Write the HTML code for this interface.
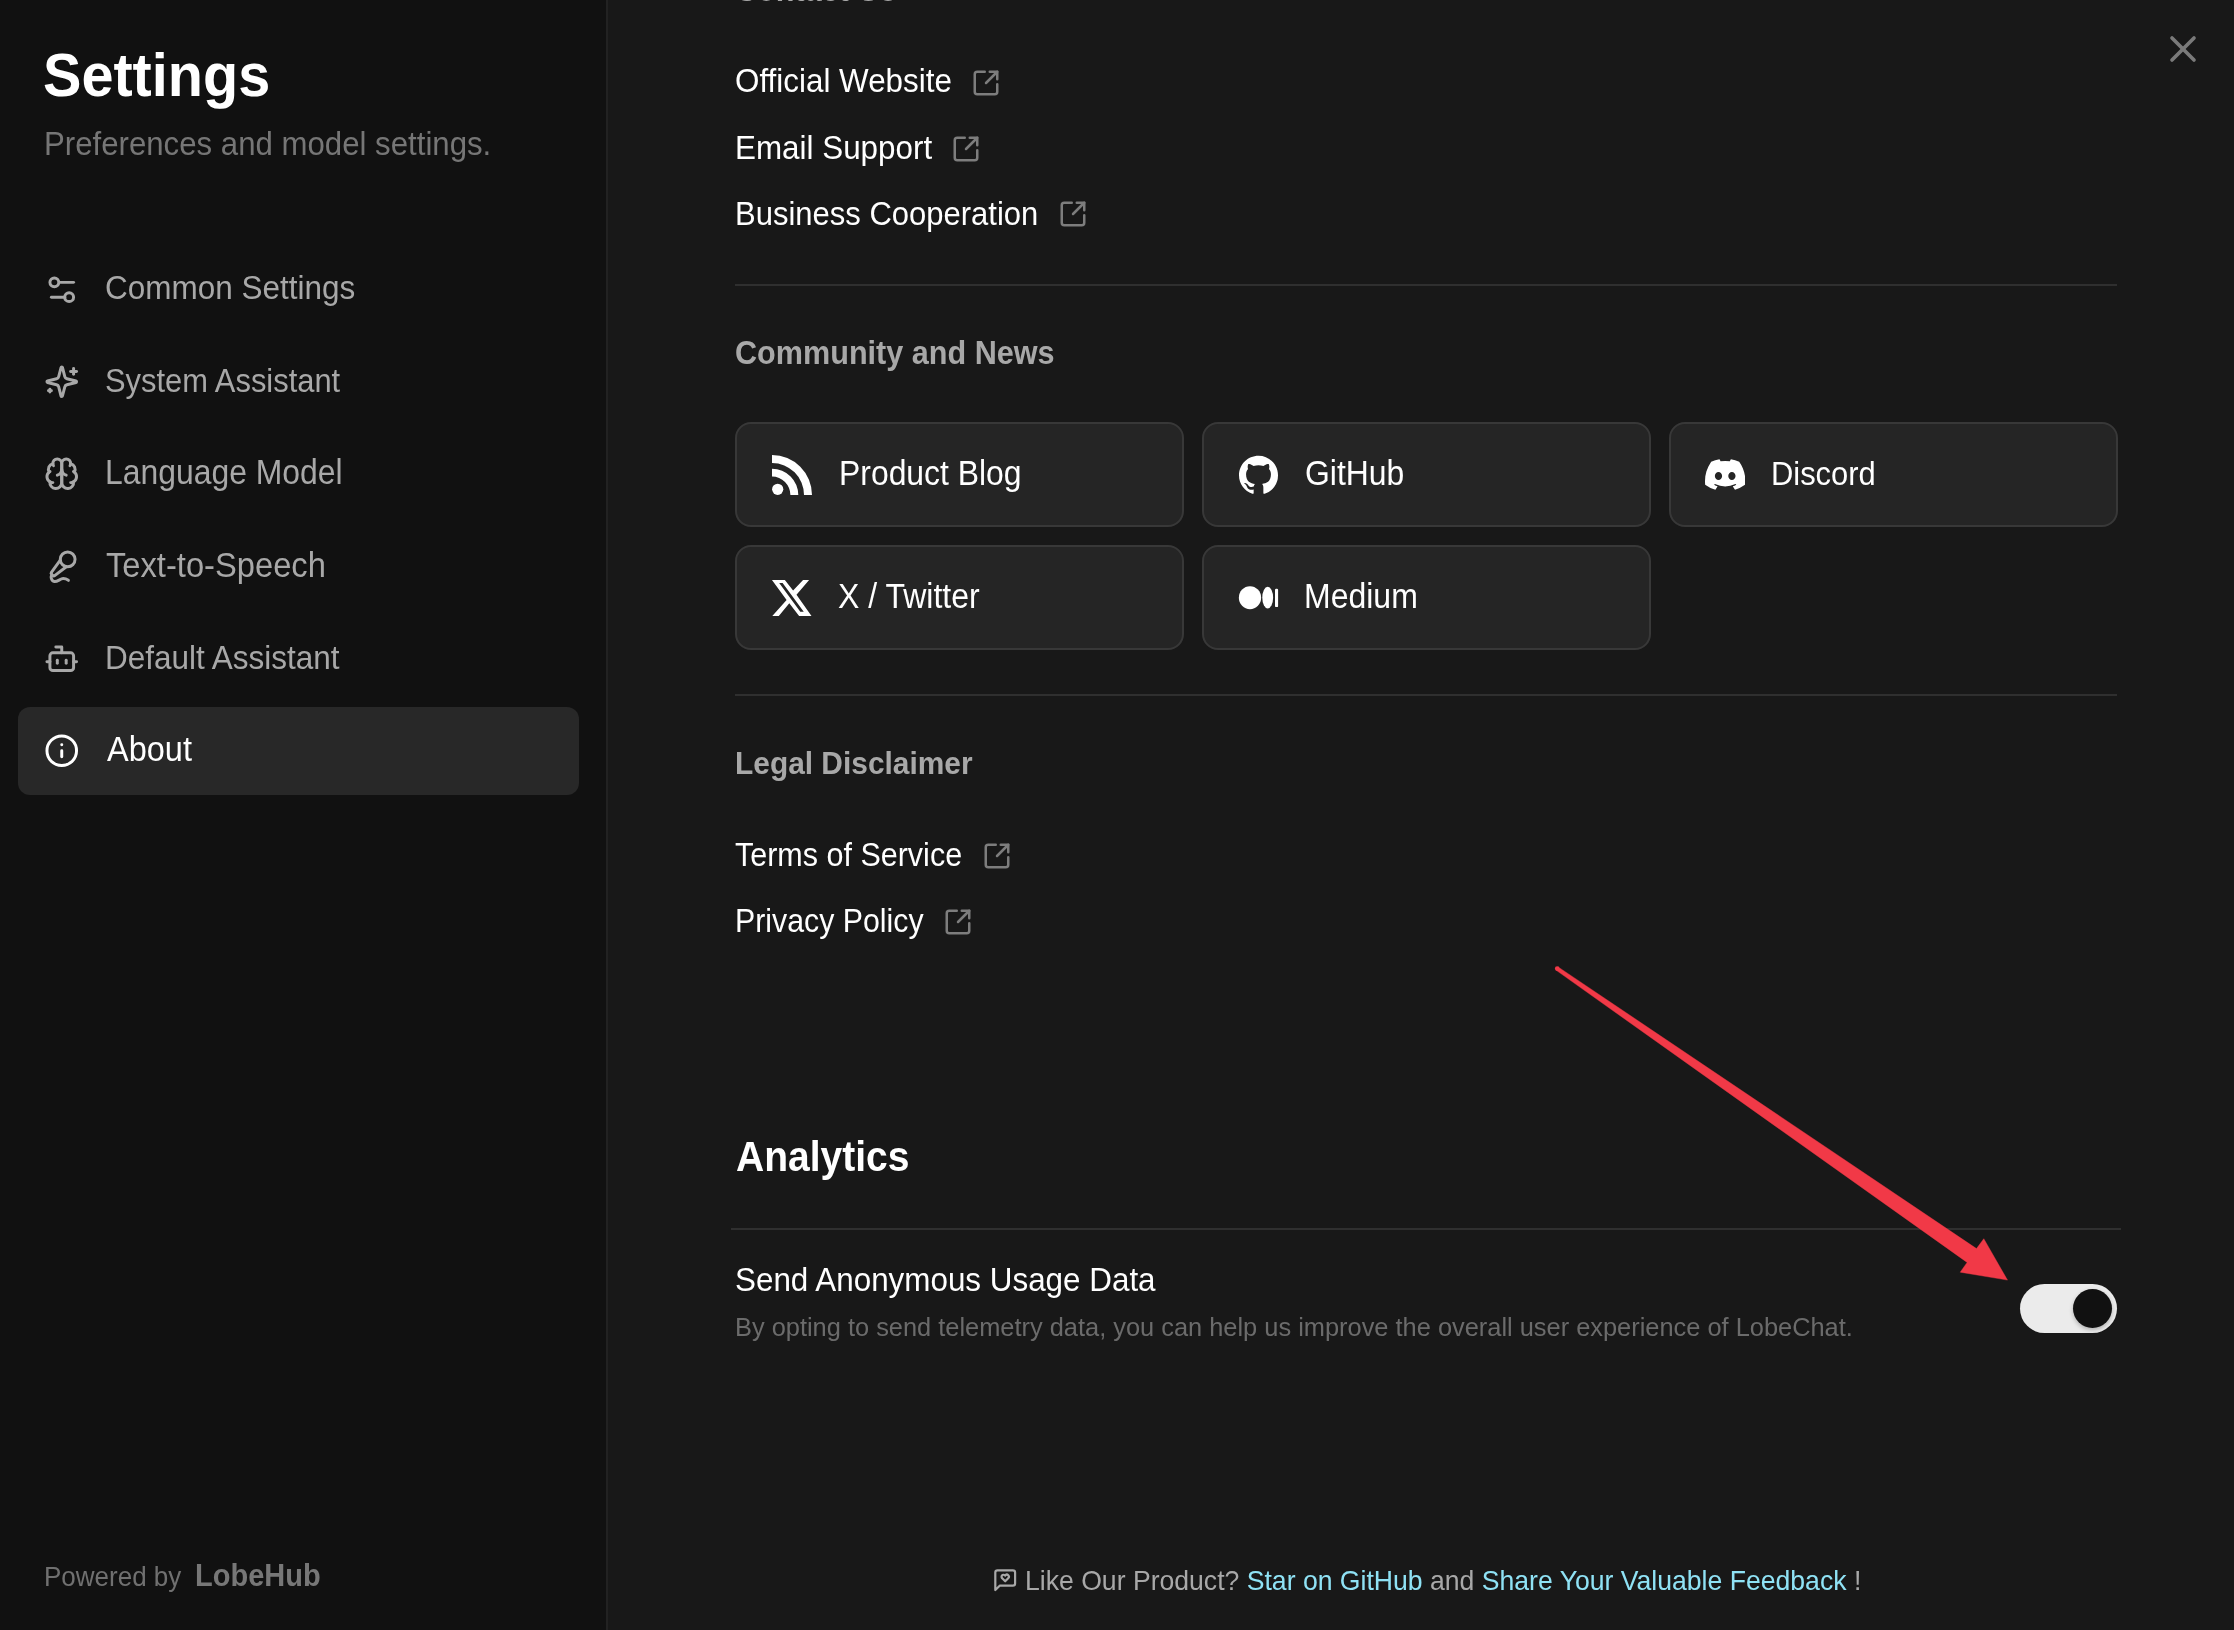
<!DOCTYPE html>
<html>
<head>
<meta charset="utf-8">
<style>
html,body{margin:0;padding:0;}
body{width:2234px;height:1630px;overflow:hidden;background:#181818;position:relative;font-family:"Liberation Sans",sans-serif;}
.t{position:absolute;line-height:1;white-space:nowrap;top:calc(var(--b) - 0.8465em);transform:scaleY(var(--sy,1.07));transform-origin:0 0.8465em;will-change:transform;}
#side{position:absolute;left:0;top:0;width:606px;height:1630px;background:#111111;}
#sideborder{position:absolute;left:606px;top:0;width:2px;height:1630px;background:#222222;}
.nav{color:#a8a8a8;font-size:31.5px;left:105px;}
.ico{position:absolute;width:35.5px;height:35.5px;fill:none;stroke:#a8a8a8;stroke-width:2;stroke-linecap:round;stroke-linejoin:round;}
#active{position:absolute;left:18px;top:707px;width:561px;height:88px;border-radius:12px;background:#282828;}
.link{color:#ffffff;font-size:31.4px;left:735px;}
.ext{position:absolute;width:30px;height:30px;fill:none;stroke:#7d7d7d;stroke-width:2;stroke-linecap:round;stroke-linejoin:round;}
.h2{color:#a8a8a8;font-size:30.6px;font-weight:bold;left:735px;}
.div{position:absolute;left:735px;width:1382px;height:2px;background:#2f2f2f;}
.btn{position:absolute;width:445px;height:101px;border:2px solid #383838;border-radius:16px;background:#252525;}
.btxt{color:#ffffff;font-size:31.6px;}
</style>
</head>
<body>
<div id="side"></div>
<div id="sideborder"></div>

<div class="t" style="--b:97px;left:42.6px;--sy:1.06;font-size:57.6px;font-weight:bold;color:#ffffff;">Settings</div>
<div class="t" style="--b:155.9px;left:43.9px;--sy:1.04;font-size:31.2px;color:#767676;">Preferences and model settings.</div>

<div id="active"></div>
<div class="t nav" style="--b:299.3px;">Common Settings</div>
<div class="t nav" style="--b:393px;font-size:30.9px;">System Assistant</div>
<div class="t nav" style="--b:485px;font-size:31.9px;">Language Model</div>
<div class="t nav" style="--b:577.6px;font-size:32.7px;left:106px;">Text-to-Speech</div>
<div class="t nav" style="--b:669.4px;">Default Assistant</div>
<div class="t nav" style="--b:762px;color:#ffffff;font-size:32.5px;left:106.5px;">About</div>

<div class="t" style="--b:1586.5px;left:44px;font-size:26px;color:#707070;">Powered by</div>
<div class="t" style="--b:1586.3px;left:195px;font-size:29px;font-weight:bold;color:#777777;">LobeHub</div>

<!-- main -->
<div class="t h2" style="--b:0.6px;">Contact Us</div>
<div class="t link" style="--b:92.9px;">Official Website</div>
<div class="t link" style="--b:159.7px;">Email Support</div>
<div class="t link" style="--b:225.3px;font-size:31px;">Business Cooperation</div>
<div class="div" style="top:284px;"></div>
<div class="t h2" style="--b:364.1px;">Community and News</div>

<div class="btn" style="left:735px;top:422px;"></div>
<div class="btn" style="left:1202px;top:422px;"></div>
<div class="btn" style="left:1668.5px;top:422px;"></div>
<div class="btn" style="left:735px;top:545px;"></div>
<div class="btn" style="left:1202px;top:545px;"></div>
<div class="t btxt" style="--b:486.5px;left:838.5px;font-size:31.9px;">Product Blog</div>
<div class="t btxt" style="--b:486.5px;left:1304.5px;font-size:31.9px;">GitHub</div>
<div class="t btxt" style="--b:486.5px;left:1770.6px;font-size:30.9px;">Discord</div>
<div class="t btxt" style="--b:607.8px;left:837.5px;font-size:32px;">X / Twitter</div>
<div class="t btxt" style="--b:607.8px;left:1304.2px;font-size:32px;">Medium</div>

<div class="div" style="top:694px;"></div>
<div class="t h2" style="--b:774px;font-size:29.9px;">Legal Disclaimer</div>
<div class="t link" style="--b:865.9px;font-size:30.5px;">Terms of Service</div>
<div class="t link" style="--b:932.5px;font-size:30.3px;">Privacy Policy</div>

<div class="t" style="--b:1171.2px;left:735.8px;font-size:39px;font-weight:bold;color:#ffffff;">Analytics</div>
<div class="div" style="top:1228px;left:731px;width:1390px;"></div>
<div class="t" style="--b:1291.8px;left:735px;--sy:1.035;font-size:31.4px;color:#ffffff;">Send Anonymous Usage Data</div>
<div class="t" style="--b:1337px;left:734.5px;--sy:1;font-size:25.4px;color:#6b6b6b;">By opting to send telemetry data, you can help us improve the overall user experience of LobeChat.</div>


<!-- nav icons -->
<svg class="ico" style="left:43.8px;top:271.7px;" viewBox="0 0 24 24"><path d="M20 7h-9"/><path d="M14 17H5"/><circle cx="17" cy="17" r="3"/><circle cx="7" cy="7" r="3"/></svg>
<svg class="ico" style="left:43.6px;top:363.8px;" viewBox="0 0 24 24"><path d="M9.937 15.5A2 2 0 0 0 8.5 14.063l-6.135-1.582a.5.5 0 0 1 0-.962L8.5 9.936A2 2 0 0 0 9.937 8.5l1.582-6.135a.5.5 0 0 1 .963 0L14.063 8.5A2 2 0 0 0 15.5 9.937l6.135 1.581a.5.5 0 0 1 0 .964L15.5 14.063a2 2 0 0 0-1.437 1.437l-1.582 6.135a.5.5 0 0 1-.963 0z"/><path d="M20 3v4"/><path d="M22 5h-4"/><path d="M4 17v2"/><path d="M5 18H3"/></svg>
<svg class="ico" style="left:43.6px;top:455.6px;" viewBox="0 0 24 24"><path d="M12 5a3 3 0 1 0-5.997.125 4 4 0 0 0-2.526 5.77 4 4 0 0 0 .556 6.588A4 4 0 1 0 12 18Z"/><path d="M12 5a3 3 0 1 1 5.997.125 4 4 0 0 1 2.526 5.77 4 4 0 0 1-.556 6.588A4 4 0 1 1 12 18Z"/><path d="M15 13a4.5 4.5 0 0 1-3-4 4.5 4.5 0 0 1-3 4"/><path d="M17.599 6.5a3 3 0 0 0 .399-1.375"/><path d="M6.003 5.125A3 3 0 0 0 6.401 6.5"/><path d="M3.477 10.896a4 4 0 0 1 .585-.396"/><path d="M19.938 10.5a4 4 0 0 1 .585.396"/><path d="M6 18a4 4 0 0 1-1.967-.516"/><path d="M19.967 17.484A4 4 0 0 1 18 18"/></svg>
<svg class="ico" style="left:43.7px;top:548.7px;" viewBox="0 0 24 24"><path d="m11 7.601-5.994 8.19a1 1 0 0 0 .1 1.298l.817.818a1 1 0 0 0 1.314.087L15.09 12"/><path d="M16.5 21.174C15.5 20.5 14.372 20 13 20c-2.058 0-3.928 2.356-6 2-2.072-.356-2.775-3.369-1.5-4.5"/><circle cx="16" cy="7" r="5"/></svg>
<svg class="ico" style="left:43.5px;top:640.7px;" viewBox="0 0 24 24"><path d="M12 8V4H8"/><rect width="16" height="12" x="4" y="8" rx="2"/><path d="M2 14h2"/><path d="M20 14h2"/><path d="M15 13v2"/><path d="M9 13v2"/></svg>
<svg class="ico" style="left:43.7px;top:732.8px;stroke:#ffffff;" viewBox="0 0 24 24"><circle cx="12" cy="12" r="10"/><path d="M12 16v-4"/><path d="M12 8h.01"/></svg>

<!-- external link icons -->
<svg class="ext" style="left:971.2px;top:67.8px;" viewBox="0 0 24 24"><path d="M21 13v6a2 2 0 0 1-2 2H5a2 2 0 0 1-2-2V5a2 2 0 0 1 2-2h6"/><path d="m21 3-9 9"/><path d="M15 3h6v6"/></svg>
<svg class="ext" style="left:950.5px;top:133.5px;" viewBox="0 0 24 24"><path d="M21 13v6a2 2 0 0 1-2 2H5a2 2 0 0 1-2-2V5a2 2 0 0 1 2-2h6"/><path d="m21 3-9 9"/><path d="M15 3h6v6"/></svg>
<svg class="ext" style="left:1057.5px;top:199.2px;" viewBox="0 0 24 24"><path d="M21 13v6a2 2 0 0 1-2 2H5a2 2 0 0 1-2-2V5a2 2 0 0 1 2-2h6"/><path d="m21 3-9 9"/><path d="M15 3h6v6"/></svg>
<svg class="ext" style="left:982.2px;top:840.8px;" viewBox="0 0 24 24"><path d="M21 13v6a2 2 0 0 1-2 2H5a2 2 0 0 1-2-2V5a2 2 0 0 1 2-2h6"/><path d="m21 3-9 9"/><path d="M15 3h6v6"/></svg>
<svg class="ext" style="left:943.3px;top:906.6px;" viewBox="0 0 24 24"><path d="M21 13v6a2 2 0 0 1-2 2H5a2 2 0 0 1-2-2V5a2 2 0 0 1 2-2h6"/><path d="m21 3-9 9"/><path d="M15 3h6v6"/></svg>

<!-- button icons -->
<svg style="position:absolute;left:771.6px;top:454.8px;" width="40" height="40" viewBox="0 0 40 40" fill="#ffffff"><circle cx="5.7" cy="34.3" r="5.6"/><path d="M0 13.7A26.3 26.3 0 0 1 26.3 40H18.4A18.4 18.4 0 0 0 0 21.6Z"/><path d="M0 0A40 40 0 0 1 40 40H32A32 32 0 0 0 0 8Z"/></svg>
<svg style="position:absolute;left:1239.2px;top:455.3px;" width="39" height="39" viewBox="0 0 24 24" fill="#ffffff"><path d="M12 .5C5.37.5 0 5.87 0 12.5c0 5.3 3.44 9.8 8.2 11.39.6.11.82-.26.82-.58v-2.03c-3.34.73-4.04-1.61-4.04-1.61-.55-1.39-1.33-1.76-1.33-1.76-1.09-.74.08-.73.08-.73 1.2.09 1.84 1.24 1.84 1.24 1.07 1.83 2.81 1.3 3.49 1 .11-.78.42-1.3.76-1.6-2.67-.3-5.47-1.33-5.47-5.93 0-1.31.47-2.38 1.24-3.22-.12-.3-.54-1.52.12-3.18 0 0 1-.32 3.3 1.23a11.5 11.5 0 0 1 6 0c2.28-1.55 3.29-1.23 3.29-1.23.66 1.66.24 2.88.12 3.18.77.84 1.23 1.91 1.23 3.22 0 4.61-2.8 5.62-5.48 5.92.43.37.82 1.1.82 2.22v3.29c0 .32.22.7.83.58A12 12 0 0 0 24 12.5C24 5.87 18.63.5 12 .5Z"/></svg>
<svg style="position:absolute;left:1704.6px;top:459px;" width="40.4" height="31" viewBox="0 0 127.14 96.36" fill="#ffffff"><path d="M107.7 8.07A105.15 105.15 0 0 0 81.47 0a72.06 72.06 0 0 0-3.36 6.83 97.68 97.68 0 0 0-29.11 0A72.37 72.37 0 0 0 45.64 0a105.89 105.89 0 0 0-26.25 8.09C2.79 32.65-1.71 56.6.54 80.21a105.73 105.73 0 0 0 32.17 16.15 77.7 77.7 0 0 0 6.89-11.11 68.42 68.42 0 0 1-10.85-5.18c.91-.66 1.8-1.34 2.66-2a75.57 75.57 0 0 0 64.32 0c.87.71 1.76 1.39 2.66 2a68.68 68.68 0 0 1-10.87 5.19 77 77 0 0 0 6.89 11.1 105.25 105.25 0 0 0 32.19-16.14c2.64-27.38-4.51-51.11-18.9-72.15ZM42.45 65.69C36.18 65.690 31 60 31 53s5-12.74 11.43-12.74S54 46 53.89 53s-5.05 12.69-11.44 12.69Zm42.24 0C78.41 65.690 73.25 60 73.25 53s5-12.74 11.44-12.74S96.23 46 96.12 53s-5.04 12.69-11.43 12.69Z"/></svg>
<svg style="position:absolute;left:762px;top:570px;" width="60" height="56" viewBox="0 0 60 56" fill="#ffffff" fill-rule="evenodd"><path d="M9.97 9.97H22.85L31.1 20.6L41.07 9.97H47.1L34.5 24.7L49.5 45.9H37.1L27.3 33.2L16.8 45.9H10.3L24.6 29.9ZM17.2 13.1H20.6L41.75 41.75H38.3Z"/></svg>
<svg style="position:absolute;left:1230px;top:570px;" width="60" height="56" viewBox="0 0 60 56" fill="#ffffff"><ellipse cx="20" cy="27.7" rx="11.15" ry="11.5"/><ellipse cx="37.7" cy="27.65" rx="5.4" ry="10.85"/><rect x="45" y="18.7" width="3.1" height="18.4" rx="1.2"/></svg>

<!-- close -->
<svg style="position:absolute;left:2161px;top:27px;" width="44" height="44" viewBox="0 0 24 24" fill="none" stroke="#7a7a7a" stroke-width="2" stroke-linecap="round"><path d="M18 6 6 18"/><path d="m6 6 12 12"/></svg>

<!-- toggle -->
<div style="position:absolute;left:2020px;top:1284px;width:97px;height:49px;border-radius:25px;background:#ebebeb;"></div>
<div style="position:absolute;left:2073px;top:1289px;width:39px;height:39px;border-radius:50%;background:#111111;box-shadow:0 2px 4px rgba(0,0,0,0.25);"></div>

<!-- arrow -->
<svg style="position:absolute;left:0;top:0;" width="2234" height="1630"><polygon points="1558.1,966.9 1976.5,1248.6 1983.8,1238.7 2007.5,1280.1 1960.2,1272.2 1967.1,1262.4 1555.9,970.1" fill="#f13947" stroke="#f13947" stroke-width="0.4" stroke-linejoin="round"/><circle cx="1557.2" cy="968.6" r="2.3" fill="#f13947"/></svg>

<!-- footer -->
<svg style="position:absolute;left:992px;top:1566.8px;" width="26.4" height="26.4" viewBox="0 0 24 24" fill="none" stroke="#a8a8a8" stroke-width="2" stroke-linecap="round" stroke-linejoin="round"><path d="M21 15a2 2 0 0 1-2 2H7l-4 4V5a2 2 0 0 1 2-2h14a2 2 0 0 1 2 2z"/><path d="M14.8 7.5a1.84 1.84 0 0 0-2.6 0l-.2.3-.3-.3a1.84 1.84 0 1 0-2.4 2.8L12 13l2.7-2.7c.9-.9.8-2.1.1-2.8"/></svg>
<div class="t" style="--b:1590.2px;left:1025.2px;font-size:26.6px;color:#a8a8a8;">Like Our Product? <span style="color:#8fe2f5">Star on GitHub</span> and <span style="color:#8fe2f5">Share Your Valuable Feedback</span> !</div>

</body>
</html>
